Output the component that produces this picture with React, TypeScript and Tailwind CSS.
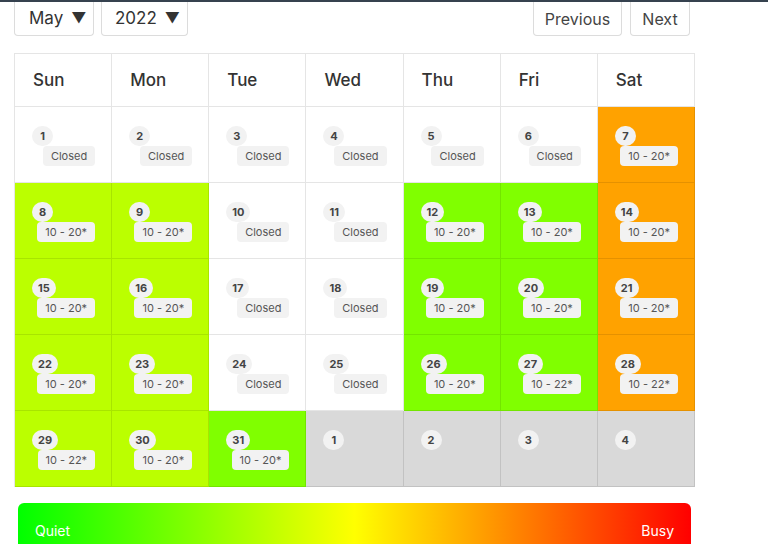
type Day = { n: number; kind: "closed" | "lime" | "green" | "orange" | "next"; hours?: string };

const days: Day[] = [
  { n: 1, kind: "closed" },
  { n: 2, kind: "closed" },
  { n: 3, kind: "closed" },
  { n: 4, kind: "closed" },
  { n: 5, kind: "closed" },
  { n: 6, kind: "closed" },
  { n: 7, kind: "orange", hours: "10 - 20*" },
  { n: 8, kind: "lime", hours: "10 - 20*" },
  { n: 9, kind: "lime", hours: "10 - 20*" },
  { n: 10, kind: "closed" },
  { n: 11, kind: "closed" },
  { n: 12, kind: "green", hours: "10 - 20*" },
  { n: 13, kind: "green", hours: "10 - 20*" },
  { n: 14, kind: "orange", hours: "10 - 20*" },
  { n: 15, kind: "lime", hours: "10 - 20*" },
  { n: 16, kind: "lime", hours: "10 - 20*" },
  { n: 17, kind: "closed" },
  { n: 18, kind: "closed" },
  { n: 19, kind: "green", hours: "10 - 20*" },
  { n: 20, kind: "green", hours: "10 - 20*" },
  { n: 21, kind: "orange", hours: "10 - 20*" },
  { n: 22, kind: "lime", hours: "10 - 20*" },
  { n: 23, kind: "lime", hours: "10 - 20*" },
  { n: 24, kind: "closed" },
  { n: 25, kind: "closed" },
  { n: 26, kind: "green", hours: "10 - 20*" },
  { n: 27, kind: "green", hours: "10 - 22*" },
  { n: 28, kind: "orange", hours: "10 - 22*" },
  { n: 29, kind: "lime", hours: "10 - 22*" },
  { n: 30, kind: "lime", hours: "10 - 20*" },
  { n: 31, kind: "green", hours: "10 - 20*" },
  { n: 1, kind: "next" },
  { n: 2, kind: "next" },
  { n: 3, kind: "next" },
  { n: 4, kind: "next" },
];

const bg: Record<Day["kind"], string> = {
  closed: "bg-white",
  lime: "bg-[#bbff00]",
  green: "bg-[#80ff00]",
  orange: "bg-[#ffa200]",
  next: "bg-[#d9d9d9]",
};

const weekdays = ["Sun", "Mon", "Tue", "Wed", "Thu", "Fri", "Sat"];

const Cell = ({ day }: { day: Day }) => (
  <div className={`h-[76px] border-r border-b border-black/10 ${bg[day.kind]} flex flex-col pt-[19px] pl-[17px] pr-4`}>
    <div className="self-start h-5 min-w-[21px] px-[6px] rounded-full bg-[#f2f2f2] flex items-center justify-center text-[11px] font-bold text-[#444]">
      {day.n}
    </div>
    {day.kind !== "next" && (
      <div className="self-end h-5 px-2 rounded bg-[#f2f2f2] text-[11px] leading-5 text-[#555]">
        {day.kind === "closed" ? "Closed" : day.hours}
      </div>
    )}
  </div>
);

export default function App() {
  return (
    <div className="w-[768px] h-[544px] overflow-hidden bg-white font-['Inter','Liberation_Sans',sans-serif] text-[#333]">
      <div className="h-[2px] bg-[#36424f]" />
      <div className="pl-[14px] w-[695px]">
        {/* Mes / año y navegación */}
        <div className="flex items-start justify-between pr-[5px]">
          <div className="flex gap-[7px]">
            <div className="h-[34px] w-[80px] border border-t-0 border-[#dcdcdc] rounded-b flex items-center pl-[14px] text-[17px]">
              May <span className="ml-[8px] text-[15px]">▼</span>
            </div>
            <div className="h-[34px] w-[87px] border border-t-0 border-[#dcdcdc] rounded-b flex items-center pl-[13px] text-[17px]">
              2022 <span className="ml-[8px] text-[15px]">▼</span>
            </div>
          </div>
          <div className="flex gap-2">
            <div className="h-[34px] w-[89px] border border-t-0 border-[#dcdcdc] rounded-b flex items-center justify-center text-[16px] text-[#444]">
              Previous
            </div>
            <div className="h-[34px] w-[60px] border border-t-0 border-[#dcdcdc] rounded-b flex items-center justify-center text-[16px] text-[#444]">
              Next
            </div>
          </div>
        </div>

        {/* Calendario */}
        <div className="mt-[17px] w-[681px] grid grid-cols-7 border-l border-t border-black/10">
          {weekdays.map((w) => (
            <div key={w} className="h-[53px] border-r border-b border-black/10 flex items-center pl-[18px] pt-[2px] text-[17px] font-medium">
              {w}
            </div>
          ))}
          {days.map((d, i) => (
            <Cell key={i} day={d} />
          ))}
        </div>

        {/* Leyenda */}
        <div className="mt-[16px] mx-1 h-[60px] rounded-t-md bg-[linear-gradient(to_right,#00ff00,#ffff00_50%,#ff0000)] flex justify-between px-[17px] pt-[18px] text-[14px] leading-5 text-white">
          <span>Quiet</span>
          <span>Busy</span>
        </div>
      </div>
    </div>
  );
}
